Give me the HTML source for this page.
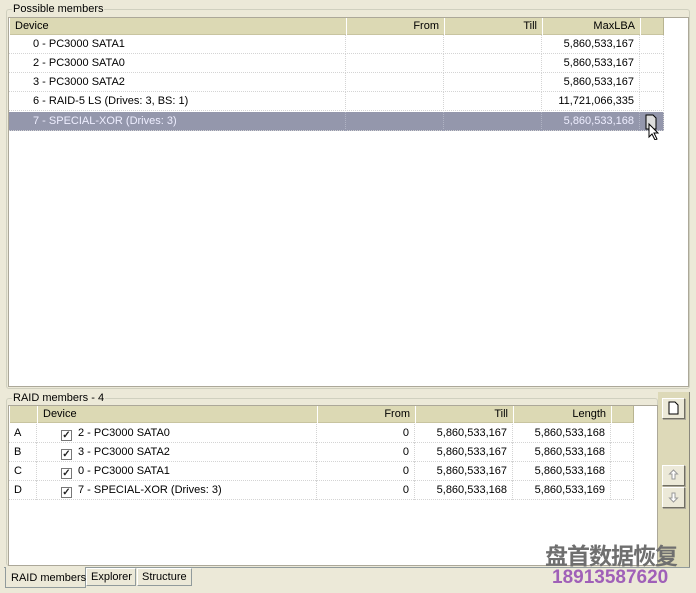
<!DOCTYPE html>
<html><head><meta charset="utf-8"><style>
*{margin:0;padding:0;box-sizing:border-box}
html,body{width:696px;height:593px;overflow:hidden}
body{background:#ece9d8;font-family:"Liberation Sans",sans-serif;font-size:11px;color:#000;position:relative}
.a{position:absolute;white-space:nowrap}
.grp{position:absolute;border:1px solid #d0d0bf;border-radius:3px}
.lbl{position:absolute;background:#ece9d8;padding:0 1px;font-size:11px;color:#000}
.white{position:absolute;background:#fff;border:1px solid #aca899}
.hdr{position:absolute;height:17px;background:#dcd9b4;border-bottom:1px solid #c8c4a0}
.hc{position:absolute;top:0;height:17px;line-height:16px;border-right:1px solid #b8b490;border-left:1px solid #fff;padding:0 5px;white-space:nowrap}
.r{text-align:right}
.row{position:absolute;height:19px;border-bottom:1px dotted #d4d4d4}
.c{position:absolute;top:0;height:19px;line-height:19px;border-right:1px dotted #d4d4d4;padding:0 5px;white-space:nowrap}
.sel{background:#9497ac;color:#eef}
.btn{position:absolute;width:23px;height:21px;background:#ece9d8;border:1px solid;border-color:#fff #716f64 #716f64 #fff;box-shadow:1px 1px 0 #aca899}
.cb{display:inline-block;width:11px;height:11px;border:1px solid #777;background:#fff;vertical-align:-2px;margin-right:6px;font-size:10px;line-height:9px;text-align:center;font-weight:bold;color:#222}
</style></head><body>
<div class="grp" style="left:6px;top:9px;width:684px;height:380px"></div>
<div class="lbl" style="left:12px;top:3px">Possible members</div>
<div class="white" style="left:8px;top:17px;width:681px;height:370px"></div>
<div class="hdr" style="left:9px;top:18px;width:655px">
 <div class="hc" style="left:0;width:338px">Device</div>
 <div class="hc r" style="left:337px;width:99px">From</div>
 <div class="hc r" style="left:435px;width:99px">Till</div>
 <div class="hc r" style="left:533px;width:99px">MaxLBA</div>
 <div class="hc" style="left:631px;width:24px"></div>
</div>
<div style="position:absolute;left:9px;top:35px">
 <div class="row" style="top:0;width:655px"><div class="c" style="left:0;width:337px;padding-left:24px">0 - PC3000 SATA1</div><div class="c" style="left:337px;width:98px"></div><div class="c" style="left:435px;width:98px"></div><div class="c r" style="left:533px;width:98px">5,860,533,167</div><div class="c" style="left:631px;width:24px"></div></div>
 <div class="row" style="top:19px;width:655px"><div class="c" style="left:0;width:337px;padding-left:24px">2 - PC3000 SATA0</div><div class="c" style="left:337px;width:98px"></div><div class="c" style="left:435px;width:98px"></div><div class="c r" style="left:533px;width:98px">5,860,533,167</div><div class="c" style="left:631px;width:24px"></div></div>
 <div class="row" style="top:38px;width:655px"><div class="c" style="left:0;width:337px;padding-left:24px">3 - PC3000 SATA2</div><div class="c" style="left:337px;width:98px"></div><div class="c" style="left:435px;width:98px"></div><div class="c r" style="left:533px;width:98px">5,860,533,167</div><div class="c" style="left:631px;width:24px"></div></div>
 <div class="row" style="top:57px;width:655px"><div class="c" style="left:0;width:337px;padding-left:24px">6 - RAID-5 LS (Drives: 3, BS: 1)</div><div class="c" style="left:337px;width:98px"></div><div class="c" style="left:435px;width:98px"></div><div class="c r" style="left:533px;width:98px">11,721,066,335</div><div class="c" style="left:631px;width:24px"></div></div>
 <div class="row sel" style="top:77px;width:655px;height:19px"><div class="c" style="left:0;width:337px;padding-left:24px;border-color:#b0b3c4">7 - SPECIAL-XOR (Drives: 3)</div><div class="c" style="left:337px;width:98px;border-color:#b0b3c4"></div><div class="c" style="left:435px;width:98px;border-color:#b0b3c4"></div><div class="c r" style="left:533px;width:98px;border-color:#b0b3c4">5,860,533,168</div><div class="c" style="left:631px;width:24px"></div></div>
</div>
<svg class="a" style="left:644px;top:114px" width="18" height="26"><path d="M2 1h7l3 3v11H2z" fill="#ddd" stroke="#000"/><path d="M5 10v13l3-3 3 6 2-1-3-6h4z" fill="#fff" stroke="#000"/></svg>

<div class="grp" style="left:6px;top:398px;width:652px;height:168px"></div>
<div class="lbl" style="left:12px;top:392px">RAID members - 4</div>
<div class="white" style="left:8px;top:405px;width:650px;height:161px"></div>
<div class="hdr" style="left:9px;top:406px;width:625px">
 <div class="hc" style="left:0;width:29px"></div>
 <div class="hc" style="left:28px;width:281px">Device</div>
 <div class="hc r" style="left:308px;width:99px">From</div>
 <div class="hc r" style="left:406px;width:99px">Till</div>
 <div class="hc r" style="left:504px;width:99px">Length</div>
 <div class="hc" style="left:602px;width:23px"></div>
</div>
<div style="position:absolute;left:9px;top:424px">
 <div class="row" style="top:0;width:625px"><div class="c" style="left:0;width:28px">A</div><div class="c" style="left:28px;width:280px;padding-left:24px"><span class="cb">✓</span>2 - PC3000 SATA0</div><div class="c r" style="left:308px;width:98px">0</div><div class="c r" style="left:406px;width:98px">5,860,533,167</div><div class="c r" style="left:504px;width:98px">5,860,533,168</div><div class="c" style="left:602px;width:23px"></div></div>
 <div class="row" style="top:19px;width:625px"><div class="c" style="left:0;width:28px">B</div><div class="c" style="left:28px;width:280px;padding-left:24px"><span class="cb">✓</span>3 - PC3000 SATA2</div><div class="c r" style="left:308px;width:98px">0</div><div class="c r" style="left:406px;width:98px">5,860,533,167</div><div class="c r" style="left:504px;width:98px">5,860,533,168</div><div class="c" style="left:602px;width:23px"></div></div>
 <div class="row" style="top:38px;width:625px"><div class="c" style="left:0;width:28px">C</div><div class="c" style="left:28px;width:280px;padding-left:24px"><span class="cb">✓</span>0 - PC3000 SATA1</div><div class="c r" style="left:308px;width:98px">0</div><div class="c r" style="left:406px;width:98px">5,860,533,167</div><div class="c r" style="left:504px;width:98px">5,860,533,168</div><div class="c" style="left:602px;width:23px"></div></div>
 <div class="row" style="top:57px;width:625px"><div class="c" style="left:0;width:28px">D</div><div class="c" style="left:28px;width:280px;padding-left:24px"><span class="cb">✓</span>7 - SPECIAL-XOR (Drives: 3)</div><div class="c r" style="left:308px;width:98px">0</div><div class="c r" style="left:406px;width:98px">5,860,533,168</div><div class="c r" style="left:504px;width:98px">5,860,533,169</div><div class="c" style="left:602px;width:23px"></div></div>
</div>
<div class="a" style="left:658px;top:392px;width:32px;height:176px;background:#ddd9b8;border-right:1px solid #8a887c"></div>
<div class="btn" style="left:662px;top:398px"><svg width="21" height="19"><path d="M6 3h6l3 3v9H6z" fill="#fff" stroke="#000"/></svg></div>
<div class="btn" style="left:662px;top:465px"><svg width="21" height="19"><path d="M10.5 4l4 4h-2.5v5h-3v-5h-2.5z" fill="#fff" stroke="#999"/></svg></div>
<div class="btn" style="left:662px;top:487px"><svg width="21" height="19"><path d="M10.5 14l4-4h-2.5v-5h-3v5h-2.5z" fill="#fff" stroke="#999"/></svg></div>

<div class="a" style="left:4px;top:567px;width:686px;height:1px;background:#919b9c"></div>
<div class="a" style="left:5px;top:567px;width:81px;height:21px;background:#ece9d8;border:1px solid #919b9c;border-top:none;line-height:22px;padding-left:5px">RAID members</div>
<div class="a" style="left:86px;top:568px;width:50px;height:18px;background:#ece9d8;border:1px solid #919b9c;border-top-color:#fff;border-left-color:#fff;line-height:17px;padding-left:4px">Explorer</div>
<div class="a" style="left:137px;top:568px;width:55px;height:18px;background:#ece9d8;border:1px solid #919b9c;border-top-color:#fff;border-left-color:#fff;line-height:17px;padding-left:4px">Structure</div>

<div class="a" style="left:545px;top:537px;font-family:'Liberation Sans','Noto Sans CJK SC',sans-serif;font-size:23px;font-weight:bold;color:#6f6f6f;letter-spacing:-1px">盘首数据恢复</div>
<div class="a" style="left:552px;top:567px;font-size:19px;font-weight:bold;color:#a060b8">18913587620</div>
</body></html>
